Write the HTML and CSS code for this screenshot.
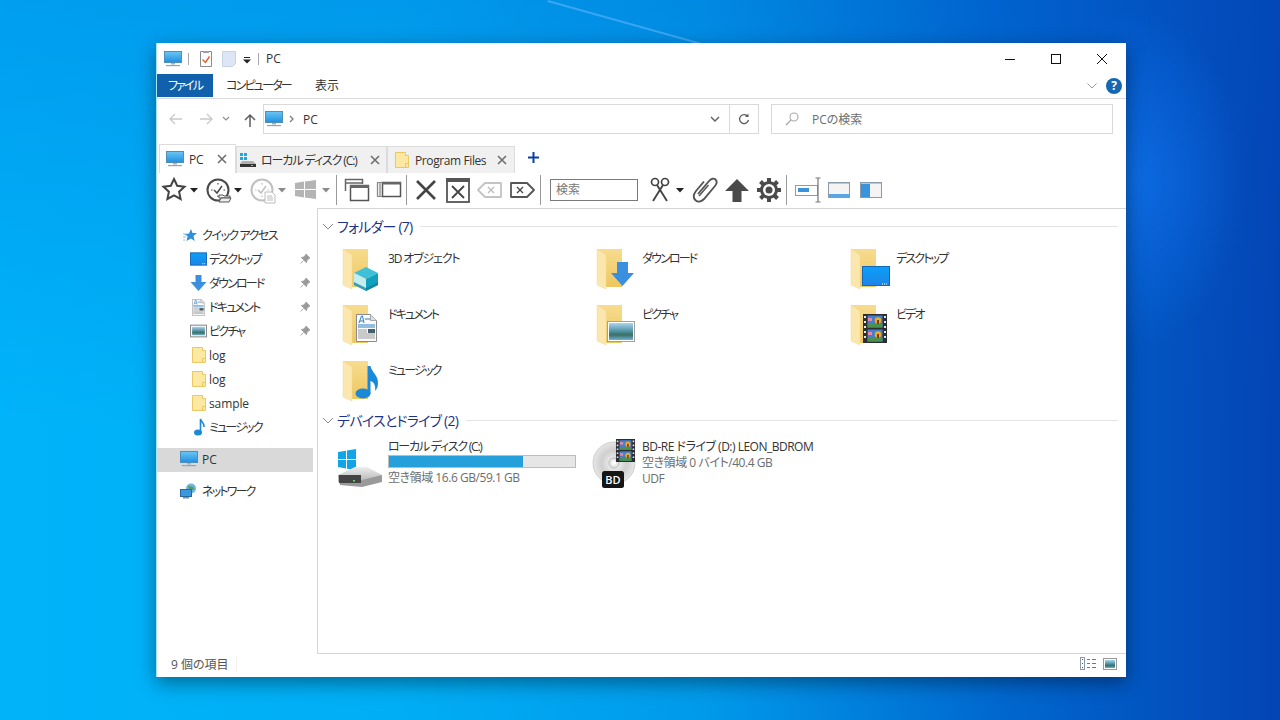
FILE: index.html
```html
<!DOCTYPE html>
<html lang="ja">
<head>
<meta charset="utf-8">
<title>PC</title>
<link rel="stylesheet" href="styles.css">
</head>
<body>
<svg class="defs" width="0" height="0" aria-hidden="true">
  <defs>
    <linearGradient id="scr" x1="0" y1="0" x2="0" y2="1"><stop offset="0" stop-color="#6cc6f5"/><stop offset="1" stop-color="#1f8fdf"/></linearGradient>
    <linearGradient id="fold" x1="0" y1="0" x2="0" y2="1"><stop offset="0" stop-color="#f7dc8f"/><stop offset="1" stop-color="#eec65e"/></linearGradient>
    <linearGradient id="dk" x1="0" y1="0" x2="0" y2="1"><stop offset="0" stop-color="#0aa0f8"/><stop offset="1" stop-color="#1e84e8"/></linearGradient>
    <linearGradient id="sky" x1="0" y1="0" x2="0" y2="1"><stop offset="0" stop-color="#a9d6ee"/><stop offset=".5" stop-color="#4d8fa0"/><stop offset=".7" stop-color="#3a6f60"/><stop offset="1" stop-color="#6fb0d8"/></linearGradient>
    <radialGradient id="disc"><stop offset="0" stop-color="#fafafa"/><stop offset=".6" stop-color="#cfcfcf"/><stop offset="1" stop-color="#e6e6e6"/></radialGradient>
    <linearGradient id="hdd" x1="0" y1="0" x2="0" y2="1"><stop offset="0" stop-color="#eeeeee"/><stop offset="1" stop-color="#b4b4b4"/></linearGradient>
    <symbol id="pc" viewBox="0 0 18 16"><rect x=".5" y=".5" width="17" height="11" fill="url(#scr)" stroke="#4e8fbb"/><rect x="7" y="12" width="4" height="1.5" fill="#9cb3c4"/><rect x="2" y="14" width="14" height="1.2" fill="#8fa6b8"/></symbol>
    <symbol id="fs" viewBox="0 0 16 18"><path d="M1.5 1.5h10v3h3v12h-13z" fill="#fde8a2" stroke="#eac866"/><path d="M11.5 16.5v-4h3" fill="none" stroke="#eac866"/></symbol>
    <symbol id="fl" viewBox="0 0 44 48"><path d="M3 3h25v38H12z" fill="url(#fold)"/><path d="M3 3l9 6v34l-9-4z" fill="#fbe7ae" stroke="#f0d894" stroke-width=".5"/></symbol>
    <symbol id="film" viewBox="0 0 24 29"><rect width="24" height="29" fill="#2a2f36"/><path d="M1 2h2v2H1zm0 5h2v2H1zm0 5h2v2H1zm0 5h2v2H1zm0 5h2v2H1zm20-20h2v2h-2zm0 5h2v2h-2zm0 5h2v2h-2zm0 5h2v2h-2zm0 5h2v2h-2z" fill="#e8e8e8"/><rect x="4.500" y="1.500" width="15" height="12" fill="#4a7ec8"/><rect x="4.500" y="15.500" width="15" height="12" fill="#4a7ec8"/><rect x="4.500" y="10" width="15" height="3.500" fill="#4c9050"/><rect x="4.500" y="24" width="15" height="3.500" fill="#4c9050"/><circle cx="15" cy="6.500" r="3.200" fill="#e8b020"/><circle cx="15" cy="20.500" r="3.200" fill="#e8b020"/><rect x="14" y="6" width="2" height="4" fill="#8a3020"/><rect x="14" y="20" width="2" height="4" fill="#8a3020"/><rect x="5" y="4" width="4" height="3" fill="#e88ab0"/><rect x="5" y="18" width="4" height="3" fill="#e88ab0"/></symbol>
    <symbol id="pin" viewBox="0 0 12 12"><path d="M7 1l4 4-1.200.6L8 7.500 7.500 9.800 2.300 4.500 4.500 4l2-1.800zM4.500 7.500L1.500 10.500" fill="#9a9a9a" stroke="#9a9a9a" stroke-width=".8"/></symbol>
    <symbol id="docic" viewBox="0 0 21 28"><path d="M.5.500h14l6 6v21H.5z" fill="#fafafa" stroke="#8a8a8a"/><path d="M14.500.500v6h6" fill="#e0e0e0" stroke="#a8a8a8"/><path d="M3 9l2.500-7h1L8 9M4 7h3M9 5h5" fill="none" stroke="#2d7fc8"/><path d="M2 11h17M2 13h17" stroke="#2d7fc8"/><path d="M2 16h9M2 18h9M2 20h17M2 22h17M2 24h17" stroke="#999"/><rect x="12" y="15" width="7" height="4" fill="#44606c"/></symbol>
    <symbol id="clock" viewBox="0 0 26 26"><circle cx="12" cy="12" r="10.500" fill="none" stroke="currentColor" stroke-width="2"/><path d="M5 12h1.500M17.500 12H19M12 5v1.500M12 17.500V19" stroke="currentColor" stroke-width="1.200"/><path d="M8 12l3 3 5-7" fill="none" stroke="currentColor" stroke-width="1.500"/></symbol>
    <symbol id="caret" viewBox="0 0 8 5"><path d="M0 0h8L4 4.500z"/></symbol>
  </defs>
</svg>

<main class="window">
  <header class="titlebar">
    <svg class="i-18 tb-pc"><use href="#pc"/></svg>
    <span class="qbar"></span>
    <svg class="qicon q1" viewBox="0 0 14 16"><path d="M1.500.500h11v15h-11z" fill="#fdfdfd" stroke="#8a8a8a"/><rect x="4" y="0" width="6" height="2" fill="#a0a0a0"/><path d="M3.500 8.500l3 3 4-6" fill="none" stroke="#e0602a" stroke-width="1.400"/></svg>
    <svg class="qicon q2" viewBox="0 0 14 16"><path d="M.5.500h13v12l-3 3H.5z" fill="#dce6f4" stroke="#c6d4e8"/></svg>
    <svg class="qdrop" viewBox="0 0 8 8"><path d="M1 1.500h6" stroke="#222"/><path d="M0 3.500h8L4 7.500z" fill="#222"/></svg>
    <span class="qbar q-last"></span>
    <span class="title">PC</span>
    <div class="winctl">
      <svg class="ctl" viewBox="0 0 46 30"><path d="M18 15.500h10" stroke="#111"/></svg>
      <svg class="ctl" viewBox="0 0 46 30"><rect x="18.500" y="10.500" width="9" height="9" fill="none" stroke="#111"/></svg>
      <svg class="ctl" viewBox="0 0 46 30"><path d="M18 10l10 10M28 10L18 20" stroke="#111" fill="none"/></svg>
    </div>
  </header>

  <nav class="ribbon">
    <span class="rtab file">ファイル</span>
    <span class="rtab comp">コンピューター</span>
    <span class="rtab view">表示</span>
    <svg class="rchev" viewBox="0 0 10 6"><path d="M.5.500L5 5 9.500.500" fill="none" stroke="#9a9a9a"/></svg>
    <span class="help">?</span>
  </nav>

  <section class="addr">
    <svg class="nav back" viewBox="0 0 14 12"><path d="M13 6H1.500M6 1L1 6l5 5" fill="none" stroke="#c9c9c9" stroke-width="1.300"/></svg>
    <svg class="nav fwd" viewBox="0 0 14 12"><path d="M1 6h11.500M8 1l5 5-5 5" fill="none" stroke="#c9c9c9" stroke-width="1.300"/></svg>
    <svg class="navdown" viewBox="0 0 8 6"><path d="M1 1l3 3 3-3" fill="none" stroke="#8f8f8f" stroke-width="1.200"/></svg>
    <svg class="nav up" viewBox="0 0 12 14"><path d="M6 14V2M1 7l5-5 5 5" fill="none" stroke="#5e5e5e" stroke-width="1.500"/></svg>
    <div class="addrbox">
      <svg class="i-18 addr-pc"><use href="#pc"/></svg>
      <svg class="crumb" viewBox="0 0 5 8"><path d="M1 1l3 3-3 3" fill="none" stroke="#777" stroke-width="1.200"/></svg>
      <span class="addr-text">PC</span>
      <svg class="addr-dd" viewBox="0 0 10 6"><path d="M1 1l4 4 4-4" fill="none" stroke="#5e5e5e" stroke-width="1.400"/></svg>
      <span class="addr-refresh"><svg class="refresh" viewBox="0 0 12 12"><path d="M9.800 3.500A4.500 4.500 0 1 0 10.500 7" fill="none" stroke="#5e5e5e" stroke-width="1.300"/><path d="M10.500.5v3.500H7z" fill="#5e5e5e"/></svg></span>
    </div>
    <div class="searchbox">
      <svg class="mag" viewBox="0 0 14 14"><circle cx="9" cy="5" r="4" fill="none" stroke="#a8a8a8" stroke-width="1.100"/><path d="M6 8l-5 5" stroke="#a8a8a8" stroke-width="1.300"/></svg>
      <span>PCの検索</span>
    </div>
  </section>

  <section class="tabs">
    <div class="tab active t1"><svg class="i-18"><use href="#pc"/></svg><span class="tab-label">PC</span><svg class="tabx" viewBox="0 0 10 10"><path d="M1 1l8 8M9 1L1 9" stroke="#6e6e6e" stroke-width="1.600"/></svg></div>
    <div class="tab t2">
      <svg class="i-18" viewBox="0 0 18 16"><rect x="1" y="1" width="3" height="3" fill="#1fa8dc"/><rect x="5" y="1" width="3" height="3" fill="#1fa8dc"/><rect x="1" y="5" width="3" height="3" fill="#1fa8dc"/><rect x="5" y="5" width="3" height="3" fill="#1fa8dc"/><path d="M3 9h11l3 3v3H1v-3z" fill="#b0b0b0"/><rect x="1" y="12" width="16" height="3" fill="#333"/><rect x="12" y="13" width="2" height="1" fill="#5fdc6a"/></svg>
      <span class="tab-label">ローカル ディスク (C:)</span><svg class="tabx" viewBox="0 0 10 10"><path d="M1 1l8 8M9 1L1 9" stroke="#6e6e6e" stroke-width="1.600"/></svg></div>
    <div class="tab t3"><svg class="i-fs"><use href="#fs"/></svg><span class="tab-label">Program Files</span><svg class="tabx" viewBox="0 0 10 10"><path d="M1 1l8 8M9 1L1 9" stroke="#6e6e6e" stroke-width="1.600"/></svg></div>
    <svg class="plus" viewBox="0 0 11 11"><path d="M5.500 0v11M0 5.500h11" stroke="#0b3fa8" stroke-width="2"/></svg>
  </section>

  <section class="toolbar">
    <svg class="tw" viewBox="0 0 44 30"><path d="M14 4l3.200 6.800 7.300.9-5.400 5 1.500 7.300L14 20.400 7.400 24l1.500-7.300-5.400-5 7.300-.9z" fill="#fff" stroke="#444" stroke-width="2"/><use href="#caret" x="30" y="13" width="8" height="5" fill="#222"/></svg>
    <svg class="tw" viewBox="0 0 44 30"><use href="#clock" x="2" y="3" width="26" height="26" color="#4a4a4a"/><path d="M15 20h4l1 1h6v2H15z" fill="#f4f4f4" stroke="#555"/><path d="M15 27l2-4h10l-2 4z" fill="#eee" stroke="#555"/><use href="#caret" x="30" y="13" width="8" height="5" fill="#222"/></svg>
    <svg class="tw" viewBox="0 0 44 30"><use href="#clock" x="2" y="3" width="26" height="26" color="#c0c0c0"/><path d="M17 17h7l3 3v8H17z" fill="#fff" stroke="#bcbcbc"/><path d="M19 21h5M19 23h6M19 25h6" stroke="#bcbcbc"/><use href="#caret" x="30" y="13" width="8" height="5" fill="#8a8a8a"/></svg>
    <svg class="tw" viewBox="0 0 44 30"><path d="M3 8l9-1.500V14H3zm10-1.600L24 5v9H13zM3 15h9v7.500L3 21zm10 0h11v9l-11-1.500z" fill="#b4b4b4"/><use href="#caret" x="30" y="13" width="8" height="5" fill="#8a8a8a"/></svg>
    <span class="sep"></span>
    <svg class="ts m4" viewBox="0 0 32 30"><path d="M4.500 16V4.500h17V9" fill="none" stroke="#666" stroke-width="1.500"/><path d="M4 8h18" stroke="#666" stroke-width="1.500"/><rect x="9.500" y="10.500" width="18" height="15" fill="#fff" stroke="#555" stroke-width="1.500"/><rect x="9" y="10" width="19" height="3" fill="#666"/></svg>
    <svg class="ts" viewBox="0 0 32 30"><rect x="9.500" y="7.500" width="18" height="14" fill="#fff" stroke="#555" stroke-width="1.500"/><rect x="9" y="7" width="19" height="2.500" fill="#666"/><path d="M4.500 7.500v14M7 7.500v14" stroke="#888" stroke-width="1.300"/><path d="M4 7.500h5M4 21.500h5" stroke="#888"/></svg>
    <span class="sep m1"></span>
    <svg class="ts m3" viewBox="0 0 32 30"><path d="M7 6l18 18M25 6L7 24" stroke="#444" stroke-width="2.600"/></svg>
    <svg class="ts" viewBox="0 0 32 30"><rect x="5" y="4" width="22" height="23" fill="#fff" stroke="#555" stroke-width="1.800"/><rect x="4" y="3" width="24" height="4" fill="#555"/><path d="M10 11l12 12M22 11L10 23" stroke="#444" stroke-width="1.800"/></svg>
    <svg class="ts" viewBox="0 0 32 30"><path d="M11 8h16v14H11l-7-7z" fill="#fff" stroke="#c4c4c4" stroke-width="1.800" stroke-linejoin="round"/><path d="M14 12l6 6M20 12l-6 6" stroke="#bcbcbc" stroke-width="1.300"/></svg>
    <svg class="ts" viewBox="0 0 32 30"><path d="M21 8H5v14h16l7-7z" fill="#fff" stroke="#555" stroke-width="1.800" stroke-linejoin="round"/><path d="M11 12l6 6M17 12l-6 6" stroke="#444" stroke-width="1.300"/></svg>
    <span class="sep m2"></span>
    <div class="tsearch">検索</div>
    <svg class="tw m6" viewBox="0 0 44 30"><circle cx="11" cy="7" r="3.500" fill="none" stroke="#444" stroke-width="1.700"/><circle cx="21" cy="7" r="3.500" fill="none" stroke="#444" stroke-width="1.700"/><path d="M13 10l10 16M19 10L9 26" stroke="#444" stroke-width="1.900"/><use href="#caret" x="32" y="13" width="8" height="5" fill="#222"/></svg>
    <svg class="ts" viewBox="0 0 32 30"><path d="M10 20L21 7c2-2.500 5-3 6.500-1.500S29 9.500 27 12L16 25c-3 3.200-6.500 3-8.500 1.200S5 21 8 17l8-9.500" transform="translate(0 -1)" fill="none" stroke="#555" stroke-width="1.900"/><path d="M11 21l9.500-11" stroke="#555" stroke-width="1.500"/></svg>
    <svg class="ts m1" viewBox="0 0 32 30"><path d="M16 4l12 12h-7.500v11h-9V16H4z" fill="#4a4a4a"/></svg>
    <svg class="ts" viewBox="0 0 32 30"><circle cx="16" cy="15" r="9" fill="#4a4a4a"/><g stroke="#4a4a4a" stroke-width="4"><path d="M16 3v4M16 23v4M4 15h4M24 15h4M7.500 6.500l3 3M21.500 20.500l3 3M24.500 6.500l-3 3M10.500 20.500l-3 3"/></g><circle cx="16" cy="15" r="6" fill="#fff"/><circle cx="16" cy="15" r="3.500" fill="#4a4a4a"/></svg>
    <span class="sep m1"></span>
    <svg class="ts m4" viewBox="0 0 32 30"><rect x="4.500" y="10.500" width="22" height="10" fill="#fff" stroke="#9a9a9a"/><rect x="7" y="13" width="11" height="4" fill="#3a94dc"/><path d="M24.500 3h5M24.500 27h5M27 3v24" stroke="#777" stroke-width="1.200"/></svg>
    <svg class="ts" viewBox="0 0 32 30"><rect x="5.500" y="7.500" width="21" height="15" fill="#f4f4f4" stroke="#8a9aa8"/><rect x="5" y="7" width="22" height="1.500" fill="#8a9aa8"/><rect x="6" y="19" width="20" height="3" fill="#5aa6e0"/></svg>
    <svg class="ts" viewBox="0 0 32 30"><rect x="5.500" y="7.500" width="21" height="15" fill="#f4f4f4" stroke="#8a9aa8"/><rect x="5" y="7" width="22" height="1.500" fill="#8a9aa8"/><rect x="6" y="9" width="9" height="13" fill="#3a94dc"/></svg>
  </section>

  <section class="main">
    <aside class="side">
      <div class="row qa"><svg class="s-star" viewBox="0 0 14 14"><path d="M8 1l1.500 4H14l-3.500 3 1.200 5L8 10.500 3.500 13l1.200-5L1 6.500 6 5.500z" fill="#2f8fdc"/><path d="M0 6h4M0 9h3M0 12h2" stroke="#8ec4ec"/></svg><span>クイック アクセス</span></div>
      <div class="row sub"><span class="s-ic"><svg class="w18" viewBox="0 0 18 14"><rect x=".5" y=".5" width="17" height="13" fill="url(#dk)" stroke="#1468b8"/><path d="M13 12h1M15 12h1" stroke="#fff"/></svg></span><span class="lab">デスクトップ</span><svg class="pin"><use href="#pin"/></svg></div>
      <div class="row sub"><span class="s-ic"><svg class="w17" viewBox="0 0 16 16"><path d="M5 0h6v7h5l-8 9-8-9h5z" fill="#3b8fe0"/></svg></span><span class="lab">ダウンロード</span><svg class="pin"><use href="#pin"/></svg></div>
      <div class="row sub"><span class="s-ic"><svg class="w12" viewBox="0 0 21 28"><use href="#docic"/></svg></span><span class="lab">ドキュメント</span><svg class="pin"><use href="#pin"/></svg></div>
      <div class="row sub"><span class="s-ic"><svg class="w18" viewBox="0 0 16 12"><rect x=".5" y=".5" width="15" height="11" fill="#fff" stroke="#8a8a8a"/><rect x="2" y="2" width="12" height="8" fill="url(#sky)"/></svg></span><span class="lab">ピクチャ</span><svg class="pin"><use href="#pin"/></svg></div>
      <div class="row sub"><span class="s-ic"><svg class="i-fs"><use href="#fs"/></svg></span><span class="lat">log</span></div>
      <div class="row sub"><span class="s-ic"><svg class="i-fs"><use href="#fs"/></svg></span><span class="lat">log</span></div>
      <div class="row sub"><span class="s-ic"><svg class="i-fs"><use href="#fs"/></svg></span><span class="lat">sample</span></div>
      <div class="row sub"><span class="s-ic"><svg class="w12b" viewBox="0 0 12 18"><ellipse cx="5" cy="14.500" rx="4" ry="3" fill="#1a8ad8"/><path d="M7.500 14.500V1c.5 3 4 4 3.500 8" fill="none" stroke="#1a8ad8" stroke-width="1.600"/></svg></span><span class="lab">ミュージック</span></div>
      <div class="row pcrow selected"><svg class="i-18"><use href="#pc"/></svg><span>PC</span></div>
      <div class="row netrow"><svg class="i-18" viewBox="0 0 18 16"><circle cx="11" cy="5.500" r="5" fill="#6fb6e4"/><path d="M8 3c2 .5 5 0 6 2s-3 3-5 2z" fill="#5a9c60"/><rect x=".5" y="6.500" width="11" height="7" fill="#3a97e0" stroke="#28689c"/><rect x="3" y="14" width="6" height="1.500" fill="#7890a0"/></svg><span class="lab">ネットワーク</span></div>
    </aside>

    <div class="pane">
      <div class="group-h g1"><svg class="gchev" viewBox="0 0 12 7"><path d="M1 1l5 5 5-5" fill="none" stroke="#8a8a8a"/></svg><span>フォルダー (7)</span><i></i></div>
      <div class="folders">
        <div class="item"><svg class="big" viewBox="0 0 44 48"><use href="#fl"/><path d="M26 21l12 6-12 6-12-6z" fill="#3fc0d8"/><path d="M14 27l12 6v12l-12-6z" fill="#c2eef2"/><path d="M38 27l-12 6v12l12-6z" fill="#12a0bf"/><path d="M14 36l12 6 12-6v3l-12 6-12-6z" fill="#0d7f9e" opacity=".75"/></svg><span class="mixed">3D オブジェクト</span></div>
        <div class="item"><svg class="big" viewBox="0 0 44 48"><use href="#fl"/><path d="M23 16h11v11h6L28.500 40 17 27h6z" fill="#3b8fe0"/></svg><span>ダウンロード</span></div>
        <div class="item"><svg class="big" viewBox="0 0 44 48"><use href="#fl"/><rect x="14.500" y="20.500" width="27" height="19" fill="url(#dk)" stroke="#1468b8"/><path d="M34 38h1M36 38h1M38 38h1" stroke="#fff"/></svg><span>デスクトップ</span></div>
        <div class="item"><svg class="big" viewBox="0 0 44 48"><use href="#fl"/><use href="#docic" x="16" y="12" width="21" height="28"/></svg><span>ドキュメント</span></div>
        <div class="item"><svg class="big" viewBox="0 0 44 48"><use href="#fl"/><rect x="13.500" y="19.500" width="27" height="20" fill="#fff" stroke="#a0a0a0"/><rect x="15" y="21" width="24" height="17" fill="url(#sky)"/></svg><span>ピクチャ</span></div>
        <div class="item"><svg class="big" viewBox="0 0 44 48"><use href="#fl"/><use href="#film" x="15" y="12" width="24" height="29"/></svg><span>ビデオ</span></div>
        <div class="item"><svg class="big" viewBox="0 0 44 48"><use href="#fl"/><ellipse cx="23" cy="35.500" rx="7.500" ry="5" fill="#1a8ad8"/><path d="M27.500 36V8h3c1 6 7.500 9 7.500 17 0 3-1 6-3 8 1-5-1-9-4.500-10v13z" fill="#1a8ad8"/></svg><span>ミュージック</span></div>
      </div>
      <div class="group-h g2"><svg class="gchev" viewBox="0 0 12 7"><path d="M1 1l5 5 5-5" fill="none" stroke="#8a8a8a"/></svg><span>デバイスとドライブ (2)</span><i></i></div>
      <div class="drives">
        <div class="drive c">
          <svg class="hdd" viewBox="0 0 46 40"><path d="M1 4l8-1.200V11H1zm9-1.400L19 1v10h-9zM1 12h8v8.500L1 19zm9 0h9v10l-9-1.200z" fill="#12a4e6"/><path d="M1 27l17-8h12l15 8v7H1z" fill="url(#hdd)"/><path d="M1 27l2 10 22 2 20-5v-7l-20 5z" fill="#9a9a9a"/><path d="M2 27h22v8H2z" fill="#444"/><rect x="16" y="32" width="2" height="1.500" fill="#5fdc6a"/></svg>
          <div class="dtext">
            <div class="dname kn">ローカル ディスク (C:)</div>
            <div class="bar"><div class="fill" style="width:72%"></div></div>
            <div class="dsub">空き領域 16.6 GB/59.1 GB</div>
          </div>
        </div>
        <div class="drive d">
          <svg class="bd" viewBox="0 0 50 52"><circle cx="24" cy="25" r="21" fill="url(#disc)" stroke="#c0c0c0" stroke-width=".7"/><circle cx="24" cy="25" r="5" fill="#e8e8e8" stroke="#b8b8b8"/><circle cx="24" cy="25" r="2" fill="#fff"/><use href="#film" x="24" y="1" width="23" height="23"/><rect x="12" y="33" width="22" height="17" rx="2.500" fill="#151515"/><text class="bdt" x="23" y="46" text-anchor="middle">BD</text></svg>
          <div class="dtext">
            <div class="dname">BD-RE ドライブ (D:) LEON_BDROM</div>
            <div class="dsub">空き領域 0 バイト/40.4 GB</div>
            <div class="dsub">UDF</div>
          </div>
        </div>
      </div>
    </div>
  </section>

  <footer class="status">
    <span class="count">9 個の項目</span>
    <span class="stsep"></span>
    <svg class="vdet" viewBox="0 0 17 13"><rect x=".5" y=".5" width="4" height="12" fill="#fff" stroke="#8a9aa8"/><path d="M2 2.500h1M2 6.500h1M2 10.500h1" stroke="#555"/><path d="M7 2.500h3M12 2.500h4M7 6.500h3M12 6.500h4M7 10.500h3M12 10.500h4" stroke="#777"/></svg>
    <svg class="vpic" viewBox="0 0 14 12"><rect x=".5" y=".5" width="13" height="11" fill="#fff" stroke="#9a9a9a"/><rect x="2" y="2" width="10" height="8" fill="url(#sky)"/></svg>
  </footer>
</main>
</body>
</html>
```
FILE: styles.css
```css
* { box-sizing: border-box; }
html, body { margin: 0; height: 100%; }
body {
  width: 1280px; height: 720px; overflow: hidden; position: relative;
  background:
    radial-gradient(ellipse 110px 170px at 1135px 180px, rgba(20,125,250,.55), rgba(20,125,250,0)),
    linear-gradient(to bottom, rgba(0,80,200,.22), rgba(0,80,200,0) 60%),
    linear-gradient(to right, #00b4fa 0%, #00aef5 31%, #009aea 55%, #0068d0 78%, #0444b4 100%);
  font-family: "Open Sans", "Noto Sans CJK JP", sans-serif;
  font-size: 12px;
  font-feature-settings: "palt";
  color: #222;
}
body::before {
  content: ""; position: absolute; left: 548px; top: 0; width: 170px; height: 2px;
  background: rgba(110,190,255,.5);
  transform: rotate(15.6deg); transform-origin: left top;
}
.defs { position: absolute; }
svg { display: block; flex: none; }

.window {
  position: absolute; left: 156px; top: 43px; width: 970px; height: 634px;
  background: #fff; border-left: 1px solid #a8e4f8;
  box-shadow: 0 6px 18px rgba(0,0,0,.4);
  display: flex; flex-direction: column;
}

/* title bar */
.titlebar { height: 31px; display: flex; align-items: center; padding-left: 7px; flex: none; }
.i-18 { width: 18px; height: 16px; }
.i-fs { width: 16px; height: 18px; }
.qbar { width: 1px; height: 12px; background: #a8a8a8; margin-left: 6px; }
.qicon { width: 14px; height: 16px; }
.q1 { margin-left: 10px; }
.q2 { margin-left: 9px; }
.qdrop { width: 8px; height: 8px; margin: 3px 7px 0 7px; }
.q-last { margin-left: 0; }
.title { margin-left: 7px; color: #333; }
.winctl { margin-left: auto; margin-right: 1px; display: flex; }
.ctl { width: 46px; height: 30px; }

/* ribbon */
.ribbon { height: 25px; display: flex; align-items: center; border-bottom: 1px solid #dadbdc; padding-bottom: 1px; flex: none; }
.rtab { height: 23px; line-height: 23px; text-align: center; letter-spacing: -1.8px; color: #333; white-space: nowrap; }
.file { width: 56px; background: #1160ab; color: #fff; }
.comp { width: 60px; margin-left: 13px; }
.view { width: 24px; margin-left: 29px; letter-spacing: 0; }
.rchev { width: 10px; height: 6px; margin-left: auto; margin-right: 9px; }
.help { width: 16px; height: 16px; border-radius: 50%; background: #1667b3; color: #fff; font: bold 12px/16px "Open Sans", sans-serif; text-align: center; margin-right: 4px; }

/* address */
.addr { height: 30px; margin-top: 5px; display: flex; align-items: center; flex: none; }
.nav { height: 12px; width: 14px; }
.back { margin-left: 12px; }
.fwd { margin-left: 16px; }
.navdown { width: 8px; height: 6px; margin-left: 9px; }
.up { margin-left: 14px; height: 14px; width: 12px; margin-top: 1px; }
.addrbox { width: 496px; height: 30px; margin-left: 7px; border: 1px solid #d9d9d9; display: flex; align-items: center; }
.addr-pc { margin-left: 1px; }
.crumb { width: 5px; height: 8px; margin-left: 6px; }
.addr-text { margin-left: 9px; color: #333; }
.addr-dd { width: 10px; height: 6px; margin-left: auto; margin-right: 9px; }
.addr-refresh { width: 29px; height: 28px; border-left: 1px solid #d9d9d9; display: flex; align-items: center; justify-content: center; }
.refresh { width: 12px; height: 12px; }
.searchbox { width: 342px; height: 30px; margin-left: 12px; border: 1px solid #d9d9d9; display: flex; align-items: center; color: #6d6d6d; }
.mag { width: 14px; height: 14px; margin-left: 13px; margin-right: 13px; }

/* tabs */
.tabs { height: 29px; margin-top: 10px; display: flex; align-items: flex-end; padding-left: 2px; flex: none; }
.tab { height: 27px; background: #f0f0f0; border: 1px solid #dcdcdc; border-bottom: 0; display: flex; align-items: center; color: #333; }
.tab.active { height: 29px; background: #fff; }
.t1 { width: 77px; padding-left: 6px; }
.t2 { width: 151px; padding-left: 2px; }
.t3 { width: 128px; padding-left: 6px; }
.tab-label { white-space: nowrap; }
.t1 .tab-label { margin-left: 5px; letter-spacing: -.2px; }
.t2 .tab-label { margin-left: 4px; letter-spacing: -1.1px; }
.t3 .tab-label { margin-left: 5px; letter-spacing: -.4px; }
.tabx { width: 10px; height: 10px; margin-left: auto; margin-right: 8px; }
.t2 .tabx { margin-right: 6px; }
.t3 .tabx { margin-right: 7px; }
.plus { width: 11px; height: 11px; margin: 0 0 10px 13px; }

/* toolbar */
.toolbar { height: 35px; display: flex; align-items: center; padding: 0 0 2px 3px; flex: none; }
.tw { width: 44px; height: 30px; }
.ts { width: 32px; height: 30px; }
.sep { width: 1px; height: 30px; background: #9a9a9a; flex: none; }
.m1 { margin-left: 1px; } .m2 { margin-left: 2px; } .m3 { margin-left: 3px; } .m4 { margin-left: 4px; } .m6 { margin-left: 6px; }
.tsearch { width: 88px; height: 22px; margin-left: 9px; border: 1px solid #7a7a7a; line-height: 20px; padding-left: 5px; color: #777; }

/* main */
.main { flex: 1; display: flex; min-height: 0; }
.side { width: 160px; flex: none; padding-top: 15px; }
.row { height: 24px; display: flex; align-items: center; white-space: nowrap; color: #333; }
.qa { padding-left: 26px; letter-spacing: -1.45px; }
.s-star { width: 14px; height: 14px; margin-right: 5px; }
.sub { padding-left: 31px; width: 160px; }
.s-ic { width: 21px; display: flex; justify-content: center; }
.w18 { width: 17px; height: 14px; }
.w17 { width: 17px; height: 16px; }
.w12 { width: 13px; height: 17px; }
.w12b { width: 12px; height: 18px; }
.lab { letter-spacing: -1.8px; }
.lat { letter-spacing: -.1px; }
.pin { width: 12px; height: 12px; margin-left: auto; margin-right: 6px; }
.pcrow { width: 156px; margin-top: 9px; padding: 0 0 2px 23px; background: #d9d9d9; }
.pcrow span, .netrow span { margin-left: 4px; }
.netrow { margin-top: 8px; padding: 0 0 2px 23px; }

.pane { flex: 1; border-top: 1px solid #d5d5d5; border-left: 1px solid #d5d5d5; border-bottom: 1px solid #d5d5d5; }
.group-h { height: 20px; display: flex; align-items: center; padding-left: 4px; padding-right: 8px; color: #1e3287; font-size: 14px; letter-spacing: -.75px; }
.group-h span { white-space: nowrap; }
.group-h i { flex: 1; height: 1px; background: #e3e3e3; margin-left: 8px; }
.g1 { margin-top: 7px; }
.gchev { width: 12px; height: 7px; margin-right: 3px; }
.folders { margin-top: 10px; padding-left: 22px; display: grid; grid-template-columns: repeat(3, 254px); grid-template-rows: 56px 56px 52px; }
.item { display: flex; gap: 4px; }
.item span { margin-top: 5px; line-height: 16px; color: #333; letter-spacing: -1.85px; white-space: nowrap; }
.item .mixed { letter-spacing: -1.15px; }
.big { width: 44px; height: 48px; }

.drives { display: grid; grid-template-columns: 253px 400px; padding-left: 19px; margin-top: 8px; }
.drive { display: flex; }
.c .hdd { width: 46px; height: 40px; margin-top: 10px; margin-right: 5px; }
.d .bd { width: 50px; height: 52px; margin-right: 2px; }
.dtext { padding-top: 1px; }
.d .dtext { padding-top: 1px; }
.dname { height: 16px; line-height: 16px; color: #333; white-space: nowrap; letter-spacing: -.5px; }
.dname.kn { letter-spacing: -1.25px; }
.dsub { height: 16px; line-height: 16px; color: #6d6d6d; white-space: nowrap; letter-spacing: -.45px; }
.bar { width: 188px; height: 13px; background: #e6e6e6; border: 1px solid #bcbcbc; margin-bottom: 2px; }
.fill { height: 100%; background: #26a0da; }
.bdt { font: 600 11px "Open Sans", sans-serif; fill: #fff; }

/* status */
.status { height: 23px; display: flex; align-items: center; flex: none; padding: 0 0 4px 14px; color: #555; }
.count { width: 65px; }
.stsep { width: 1px; height: 14px; background: #efefef; }
.vdet { width: 17px; height: 13px; margin-left: auto; margin-right: 6px; }
.vpic { width: 14px; height: 12px; margin-right: 9px; }
```
